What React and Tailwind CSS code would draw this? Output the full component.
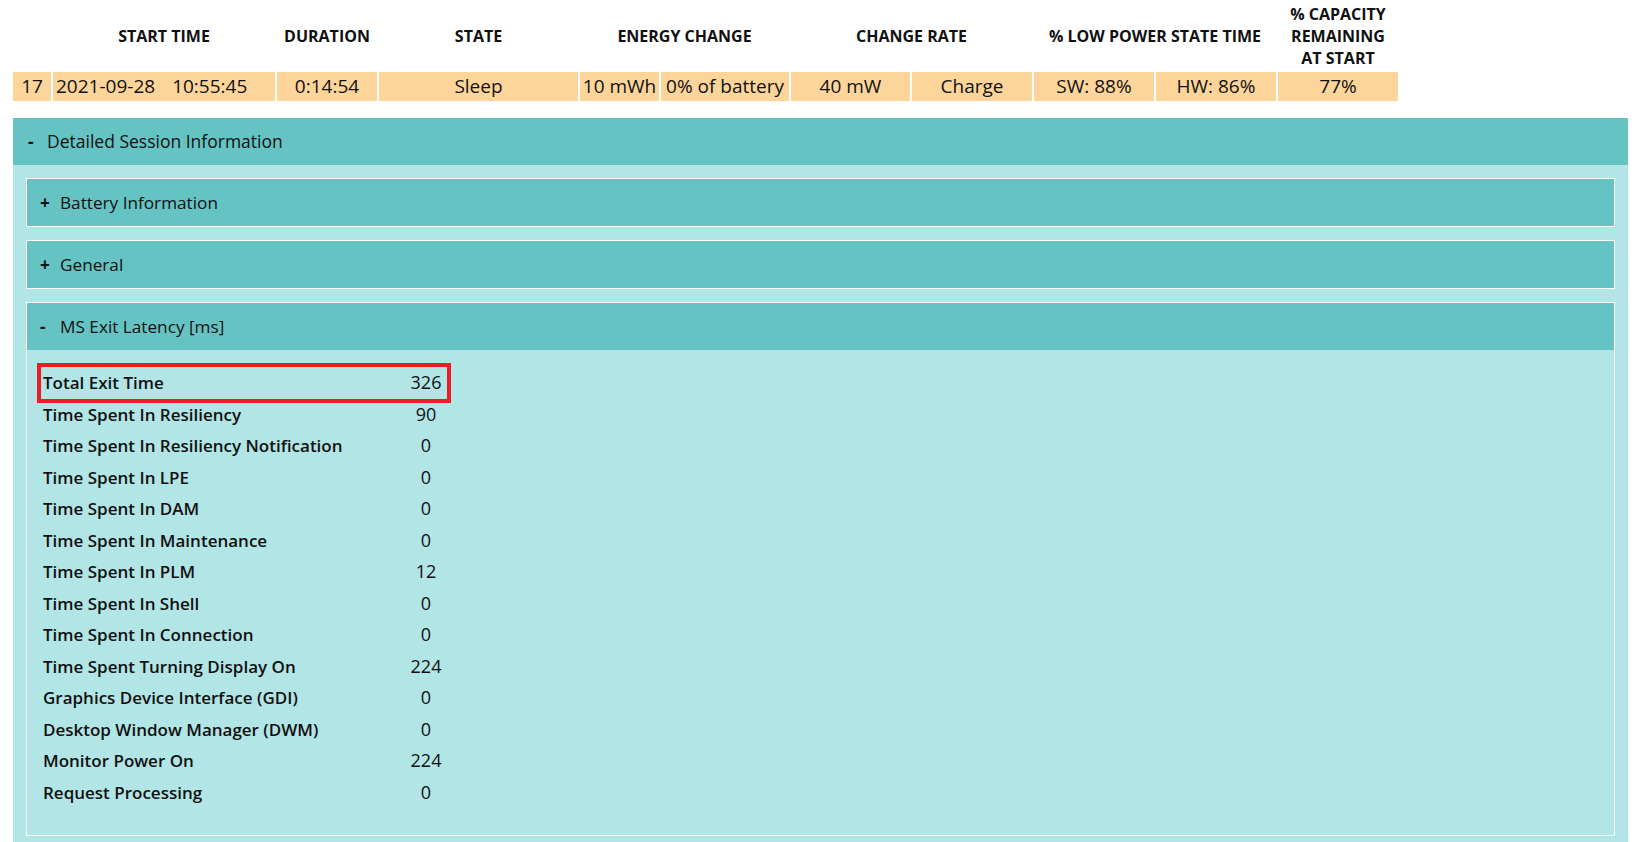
import React from 'react';

const latency = [
    ['Total Exit Time', '326'],
    ['Time Spent In Resiliency', '90'],
    ['Time Spent In Resiliency Notification', '0'],
    ['Time Spent In LPE', '0'],
    ['Time Spent In DAM', '0'],
    ['Time Spent In Maintenance', '0'],
    ['Time Spent In PLM', '12'],
    ['Time Spent In Shell', '0'],
    ['Time Spent In Connection', '0'],
    ['Time Spent Turning Display On', '224'],
    ['Graphics Device Interface (GDI)', '0'],
    ['Desktop Window Manager (DWM)', '0'],
    ['Monitor Power On', '224'],
    ['Request Processing', '0'],
];

function Cell({ w, children, className = '' }) {
    return (
        <div className={`${w} h-[29px] bg-[#fdd59b] flex items-center justify-center shrink-0 ${className}`}>
            {children}
        </div>
    );
}

function Panel({ sign, title, children }) {
    return (
        <div className="border border-white">
            <div className="h-[47px] bg-[#66c3c3] flex items-center pl-[13px] pt-[1px] text-[17.2px]">
                <span className="w-[20px] font-bold">{sign}</span>
                <span>{title}</span>
            </div>
            {children}
        </div>
    );
}

export default function App() {
    return (
        <div className="min-h-screen bg-white font-['Open_Sans',sans-serif] text-[#111] overflow-hidden">
            {/* header titles */}
            <div className="flex gap-[2px] pl-[13px] pt-[3px] h-[69px] items-center text-[16px] font-bold uppercase text-center leading-[22px]">
                <div className="w-[38px] shrink-0" />
                <div className="w-[222px] shrink-0">Start Time</div>
                <div className="w-[100px] shrink-0">Duration</div>
                <div className="w-[199px] shrink-0">State</div>
                <div className="w-[209px] shrink-0">Energy Change</div>
                <div className="w-[241px] shrink-0">Change Rate</div>
                <div className="w-[242px] shrink-0">% Low Power State Time</div>
                <div className="w-[120px] shrink-0 px-[8px]">% Capacity Remaining At Start</div>
            </div>

            {/* session row */}
            <div className="flex gap-[2px] pl-[13px] mt-[3px] text-[19px]">
                <Cell w="w-[38px]">17</Cell>
                <Cell w="w-[222px]" className="!justify-start pl-[3px]">
                    <span>2021-09-28</span>
                    <span className="ml-[17px]">10:55:45</span>
                </Cell>
                <Cell w="w-[100px]">0:14:54</Cell>
                <Cell w="w-[199px]">Sleep</Cell>
                <Cell w="w-[79px]">10 mWh</Cell>
                <Cell w="w-[128px]">0% of battery</Cell>
                <Cell w="w-[119px]">40 mW</Cell>
                <Cell w="w-[120px]">Charge</Cell>
                <Cell w="w-[120px]">SW: 88%</Cell>
                <Cell w="w-[120px]">HW: 86%</Cell>
                <Cell w="w-[120px]">77%</Cell>
            </div>

            {/* detailed session information */}
            <div className="ml-[13px] w-[1615px] mt-[17px]">
                <div className="h-[47px] bg-[#66c3c3] flex items-center pl-[15px] text-[17.5px]">
                    <span className="w-[19px] font-bold">-</span>
                    <span>Detailed Session Information</span>
                </div>
                <div className="bg-[#b2e5e5] p-[13px] flex flex-col gap-[13px]">
                    <Panel sign="+" title="Battery Information" />
                    <Panel sign="+" title="General" />
                    <Panel sign="-" title="MS Exit Latency [ms]">
                        <div className="pt-[17px] pb-[27px] pl-[14px]">
                            <div className="w-[406px]">
                                {latency.map(([label, value], i) => (
                                    <div
                                        key={label}
                                        className={`h-[31.5px] flex items-center ${i === 0 ? 'outline-[4px] outline-solid outline-[#ed1c24]' : ''}`}
                                    >
                                        <div className="flex-1 pl-[2px] text-[17px] font-semibold">{label}</div>
                                        <div className="w-[42px] text-center text-[18px]">{value}</div>
                                    </div>
                                ))}
                            </div>
                        </div>
                    </Panel>
                </div>
            </div>
        </div>
    );
}
